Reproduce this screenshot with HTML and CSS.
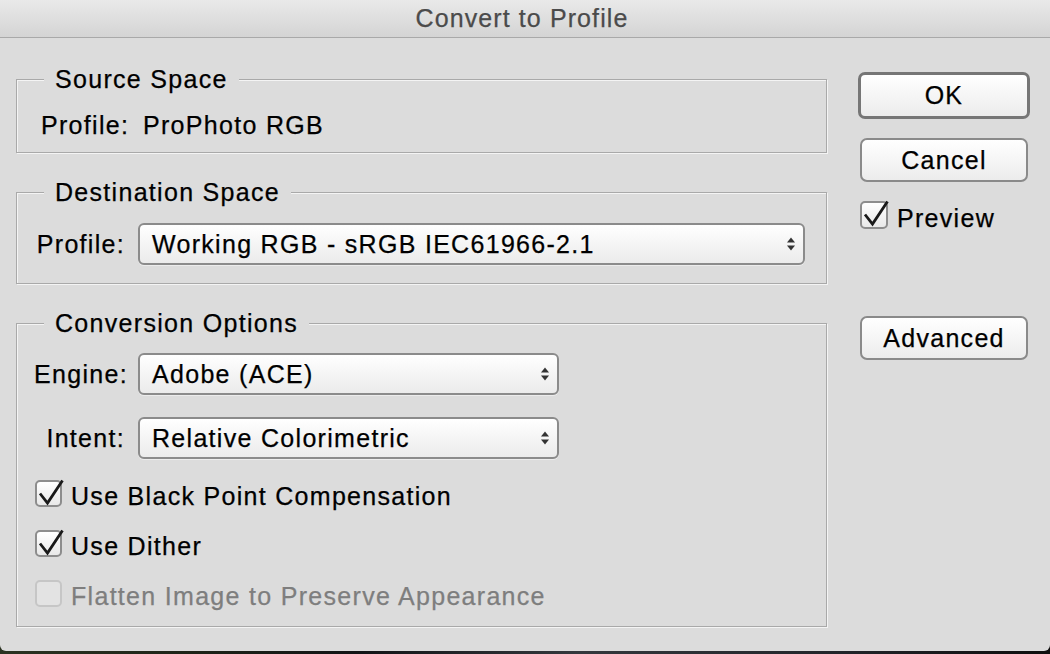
FILE: index.html
```html
<!DOCTYPE html>
<html lang="en">
<head>
<meta charset="utf-8">
<title>Convert to Profile</title>
<link rel="stylesheet" href="styles.css">
</head>
<body>
<div class="window">
  <header class="titlebar">Convert to Profile</header>
  <div class="dialog">
    <div class="main">
      <fieldset class="group group-source">
        <legend>Source Space</legend>
        <div class="row">
          <span class="label">Profile:</span>
          <span class="value">ProPhoto RGB</span>
        </div>
      </fieldset>

      <fieldset class="group group-dest">
        <legend>Destination Space</legend>
        <div class="row">
          <span class="label">Profile:</span>
          <div class="select select-wide">
            <span>Working RGB - sRGB IEC61966-2.1</span>
            <svg class="arrows" width="10" height="18" viewBox="0 0 10 18"><polygon points="1,7.5 5,2.5 9,7.5"/><polygon points="1,10.5 5,15.5 9,10.5"/></svg>
          </div>
        </div>
      </fieldset>

      <fieldset class="group group-options">
        <legend>Conversion Options</legend>
        <div class="selects">
          <div class="row">
            <span class="label">Engine:</span>
            <div class="select select-narrow">
              <span>Adobe (ACE)</span>
              <svg class="arrows" width="10" height="18" viewBox="0 0 10 18"><polygon points="1,7.5 5,2.5 9,7.5"/><polygon points="1,10.5 5,15.5 9,10.5"/></svg>
            </div>
          </div>
          <div class="row">
            <span class="label">Intent:</span>
            <div class="select select-narrow">
              <span>Relative Colorimetric</span>
              <svg class="arrows" width="10" height="18" viewBox="0 0 10 18"><polygon points="1,7.5 5,2.5 9,7.5"/><polygon points="1,10.5 5,15.5 9,10.5"/></svg>
            </div>
          </div>
        </div>
        <div class="checks">
          <div class="check">
            <span class="box"><svg class="tick" width="28" height="28" viewBox="0 0 28 28"><path d="M5 13.5 L12.5 23 L27.5 0.5"/></svg></span>
            <span>Use Black Point Compensation</span>
          </div>
          <div class="check">
            <span class="box"><svg class="tick" width="28" height="28" viewBox="0 0 28 28"><path d="M5 13.5 L12.5 23 L27.5 0.5"/></svg></span>
            <span>Use Dither</span>
          </div>
          <div class="check check-disabled">
            <span class="box"></span>
            <span>Flatten Image to Preserve Appearance</span>
          </div>
        </div>
      </fieldset>
    </div>

    <div class="side">
      <button class="btn btn-default">OK</button>
      <button class="btn btn-cancel">Cancel</button>
      <div class="check check-preview">
        <span class="box"><svg class="tick" width="28" height="28" viewBox="0 0 28 28"><path d="M5 13.5 L12.5 23 L27.5 0.5"/></svg></span>
        <span>Preview</span>
      </div>
      <button class="btn btn-advanced">Advanced</button>
    </div>
  </div>
</div>
</body>
</html>
```

FILE: styles.css
```css
html, body {
  margin: 0;
  padding: 0;
}

body {
  width: 1050px;
  height: 654px;
  overflow: hidden;
  background: linear-gradient(90deg, #2c3322 0%, #1e2418 18%, #121416 34%, #34383d 55%, #22252a 80%, #0e0e0e 100%);
  font-family: "Liberation Sans", Arial, sans-serif;
}

.window {
  width: 1050px;
  height: 651px;
  background: #dcdcdc;
  border-radius: 0 0 6px 6px;
  overflow: hidden;
  font-size: 25px;
  letter-spacing: 1.3px;
  color: #000;
  -webkit-text-stroke: 0.25px currentColor;
}

.titlebar {
  height: 37px;
  line-height: 37px;
  border-bottom: 1px solid #a9a9a9;
  background: linear-gradient(#e9e9e9, #d4d4d4);
  color: #4b4b4b;
  text-align: center;
  letter-spacing: 1.1px;
  padding-right: 6px;
}

.dialog {
  display: flex;
  gap: 30px;
  padding: 26px 0 0 16px;
}

.main {
  width: 812px;
  display: flex;
  flex-direction: column;
  gap: 24px;
}

.group {
  box-sizing: border-box;
  width: 811px;
  min-width: 0;
  margin: 0;
  padding: 16px 20px 12px 17px;
  border: 1px solid #a9a9a9;
  box-shadow: 1px 1px 0 #f4f4f4, inset 1px 1px 0 #f4f4f4;
}

.group legend {
  height: 30px;
  line-height: 30px;
  padding: 0 11px;
  margin-left: 10px;
  background: #dcdcdc;
}

.group-dest {
  padding-bottom: 18px;
}

.group-options {
  padding-top: 15px;
  padding-bottom: 15px;
}

.row {
  display: flex;
  align-items: center;
  gap: 13px;
  line-height: 30px;
}

.label {
  flex: none;
  width: 91px;
  text-align: right;
}

.group-source .label {
  padding-left: 7px;
  text-align: left;
  width: 84px;
}

.value {
  padding-left: 5px;
}

.select {
  box-sizing: border-box;
  height: 42px;
  display: flex;
  align-items: center;
  justify-content: space-between;
  padding: 0 7px 0 12px;
  border: 2px solid #8b8b8b;
  border-radius: 6px;
  background: linear-gradient(#ffffff, #ebebeb);
  box-shadow: 0 1px 0 #ececec;
}

.select-wide {
  width: 667px;
}

.select-narrow {
  width: 421px;
}

.arrows {
  fill: #333;
  flex: none;
}

.selects {
  display: flex;
  flex-direction: column;
  gap: 22px;
}

.checks {
  display: flex;
  flex-direction: column;
  gap: 20px;
  margin-top: 22px;
}

.check {
  display: flex;
  align-items: center;
  gap: 9px;
  height: 30px;
  line-height: 30px;
}

.box {
  position: relative;
  flex: none;
  box-sizing: border-box;
  width: 27px;
  height: 27px;
  margin-bottom: 5px;
  margin-left: 1px;
  border: 2px solid #8d8d8d;
  border-radius: 5px;
  background: linear-gradient(#ffffff, #e9e9e9);
}

.tick {
  position: absolute;
  left: -2px;
  top: -2px;
  overflow: visible;
  fill: none;
  stroke: #1a1a1a;
  stroke-width: 2.8;
  stroke-linejoin: miter;
}

.check-disabled {
  color: #7e7e7e;
}

.check-disabled .box {
  border-color: #c6c6c6;
  background: #e3e3e3;
}

.side {
  width: 172px;
  display: flex;
  flex-direction: column;
  align-items: flex-start;
  padding-top: 8px;
}

.btn {
  box-sizing: border-box;
  width: 168px;
  height: 44px;
  padding: 0;
  border: 2px solid #8a8a8a;
  border-radius: 7px;
  background: linear-gradient(#ffffff, #ececec);
  font: inherit;
  letter-spacing: inherit;
  color: #000;
}

.btn-default {
  width: 172px;
  height: 47px;
  border: 3px solid #767676;
}

.btn-cancel {
  margin: 19px 0 0 2px;
}

.check-preview {
  margin: 21px 0 0 1px;
}

.check-preview .box {
  width: 28px;
  height: 28px;
  margin-bottom: 6px;
}

.btn-advanced {
  margin: 83px 0 0 2px;
}
```
